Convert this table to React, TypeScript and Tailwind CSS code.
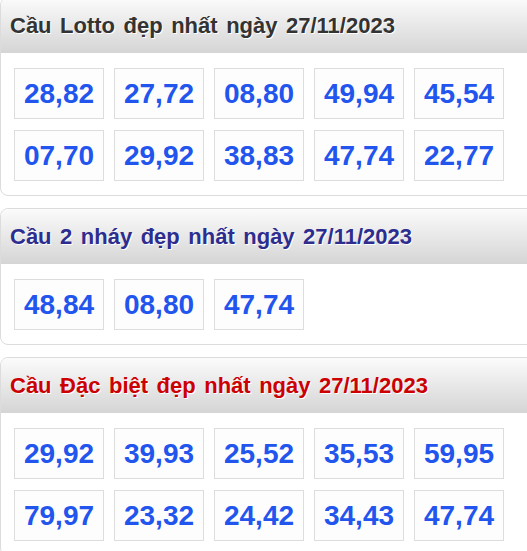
import React from "react";

type Panel = {
  title: string;
  color: string;
  rows: string[][];
};

const panels: Panel[] = [
  {
    title: "Cầu Lotto đẹp nhất ngày 27/11/2023",
    color: "text-[#333333]",
    rows: [
      ["28,82", "27,72", "08,80", "49,94", "45,54"],
      ["07,70", "29,92", "38,83", "47,74", "22,77"],
    ],
  },
  {
    title: "Cầu 2 nháy đẹp nhất ngày 27/11/2023",
    color: "text-[#2d2d8f]",
    rows: [["48,84", "08,80", "47,74"]],
  },
  {
    title: "Cầu Đặc biệt đẹp nhất ngày 27/11/2023",
    color: "text-[#cc0000]",
    rows: [
      ["29,92", "39,93", "25,52", "35,53", "59,95"],
      ["79,97", "23,32", "24,42", "34,43", "47,74"],
    ],
  },
];

function NumberBox({ value }: { value: string }) {
  return (
    <div className="w-[90px] h-[51px] flex items-center justify-center border border-[#dddddd] bg-[#fdfdfd] text-[28px] font-bold text-[#2255ee] leading-none">
      {value}
    </div>
  );
}

function CauPanel({ panel, first }: { panel: Panel; first?: boolean }) {
  return (
    <div
      className={`w-[560px] border border-[#dcdcdc] rounded-[8px] bg-white overflow-hidden ${
        first ? "-mt-[3px]" : "mt-[12px]"
      }`}
    >
      {/* Header */}
      <div className="h-[55px] flex items-center pl-[9px] bg-gradient-to-b from-[#fbfbfb] to-[#d5d5d5]">
        <h2
          className={`text-[22px] font-bold ${panel.color} [word-spacing:2.4px] [text-shadow:1px_1px_0_#ffffff]`}
        >
          {panel.title}
        </h2>
      </div>

      {/* Numbers */}
      <div className="flex flex-col gap-[11px] pt-[15px] pb-[14px] pl-[13px]">
        {panel.rows.map((row, i) => (
          <div key={i} className="flex gap-[10px]">
            {row.map((n, j) => (
              <NumberBox key={j} value={n} />
            ))}
          </div>
        ))}
      </div>
    </div>
  );
}

export default function App() {
  return (
    <div
      className="w-[527px] h-[551px] overflow-hidden bg-white"
      style={{ fontFamily: '"Liberation Sans", Arial, sans-serif' }}
    >
      {panels.map((p, i) => (
        <CauPanel key={p.title} panel={p} first={i === 0} />
      ))}
    </div>
  );
}
